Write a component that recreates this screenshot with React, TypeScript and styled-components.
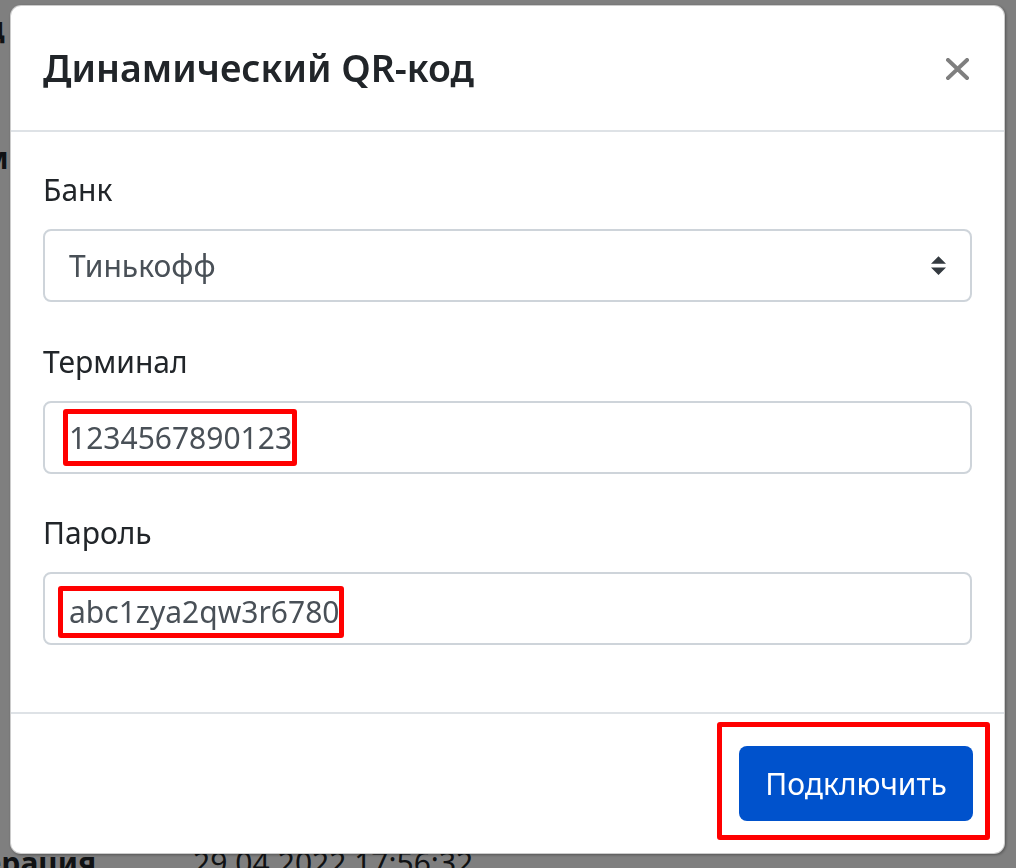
import React from "react";
import styled, { createGlobalStyle } from "styled-components";

const GlobalStyle = createGlobalStyle`
  * { box-sizing: border-box; }
  html, body { margin: 0; padding: 0; }
  body {
    background: #ffffff;
    font-family: "Noto Sans", "Open Sans", sans-serif;
    color: #212529;
    overflow: hidden;
  }
`;

const Page = styled.div`
  height: 868px;
  overflow: hidden;
  padding-top: 7px;
`;

const Details = styled.div<{ $shift: number }>`
  display: grid;
  grid-template-columns: 252px 1fr;
  grid-auto-rows: 130px;
  margin-left: ${(p) => p.$shift}px;
  font-size: 30px;
  line-height: 42px;
`;

const DetailLabel = styled.div`
  font-weight: 700;
`;

const DetailValue = styled.div``;

const LastRow = styled(Details)`
  margin-top: 575px;
`;

const Backdrop = styled.div`
  position: fixed;
  inset: 0;
  background: rgba(0, 0, 0, 0.5);
  padding: 5px 0 0 10px;
`;

const Dialog = styled.div`
  width: 995px;
  background: #ffffff;
  border: 1px solid rgba(0, 0, 0, 0.2);
  border-radius: 11px;
  box-shadow: 1px 1px 3px rgba(0, 0, 0, 0.35);
  display: flex;
  flex-direction: column;
`;

const Header = styled.div`
  display: flex;
  align-items: center;
  justify-content: space-between;
  height: 126px;
  padding: 0 32px;
  border-bottom: 2px solid #dee2e6;
`;

const Title = styled.h5`
  margin: 0;
  font-size: 37.5px;
  line-height: 56px;
  font-weight: 600;
  color: #212529;
`;

const CloseButton = styled.button`
  border: 0;
  background: transparent;
  padding: 0;
  margin-right: 3px;
  margin-top: 2px;
  display: flex;
  cursor: pointer;
`;

const Body = styled.div`
  padding: 35px 32px 30px;
`;

const Group = styled.div`
  margin-bottom: 36.5px;
`;

const Label = styled.label`
  display: block;
  font-size: 30px;
  line-height: 45px;
  margin-bottom: 17px;
  color: #212529;
`;

const Field = styled.div`
  position: relative;
  display: flex;
  align-items: center;
  height: 73px;
  border: 2px solid #ced4da;
  border-radius: 8px;
  padding: 0 24px;
  font-size: 30px;
  color: #495057;
`;

const Arrows = styled.svg`
  position: absolute;
  right: 24px;
  top: 25px;
`;

const Mark = styled.span<{ $pl: number; $h: number; $dy?: number }>`
  display: inline-flex;
  align-items: center;
  height: ${(p) => p.$h}px;
  border: 5px solid #ff0000;
  border-radius: 3px;
  padding: 0 0 0 ${(p) => p.$pl}px;
  margin-left: ${(p) => -(p.$pl + 5)}px;
  margin-top: ${(p) => p.$dy ?? 0}px;
`;

const Footer = styled.div`
  display: flex;
  justify-content: flex-end;
  border-top: 2px solid #dee2e6;
  padding: 8px 14px 13px;
`;

const ButtonMark = styled.div`
  border: 5px solid #ff0000;
  border-radius: 3px;
  padding: 19px 12px 14px 17px;
`;

const PrimaryButton = styled.button`
  width: 234px;
  height: 75px;
  border: 0;
  border-radius: 8px;
  background: #0052cc;
  color: #ffffff;
  font-family: "Noto Sans", "Open Sans", sans-serif;
  font-size: 30px;
  cursor: pointer;
`;

export default function App() {
  return (
    <>
      <GlobalStyle />
      <Page>
        <Details $shift={-53}>
          <DetailLabel>Код</DetailLabel>
          <DetailValue>QR</DetailValue>
          <DetailLabel>Сумма</DetailLabel>
          <DetailValue>0,00</DetailValue>
        </Details>
        <LastRow $shift={-59}>
          <DetailLabel>Операция</DetailLabel>
          <DetailValue>29.04.2022 17:56:32</DetailValue>
        </LastRow>
      </Page>
      <Backdrop>
        <Dialog>
          <Header>
            <Title>Динамический QR-код</Title>
            <CloseButton aria-label="Закрыть">
              <svg width="23" height="22" viewBox="0 0 23 22">
                <path
                  d="M2 2 L21 20 M21 2 L2 20"
                  stroke="#7f7f7f"
                  strokeWidth="4"
                  strokeLinecap="square"
                />
              </svg>
            </CloseButton>
          </Header>
          <Body>
            <Group>
              <Label>Банк</Label>
              <Field>
                Тинькофф
                <Arrows width="15" height="19" viewBox="0 0 4 5">
                  <path d="M2 0L0 2h4zm0 5L0 3h4z" fill="#343a40" />
                </Arrows>
              </Field>
            </Group>
            <Group>
              <Label>Терминал</Label>
              <Field>
                <Mark $pl={1} $h={57}>1234567890123</Mark>
              </Field>
            </Group>
            <Group>
              <Label>Пароль</Label>
              <Field>
                <Mark $pl={6} $h={52} $dy={6}>abc1zya2qw3r6780</Mark>
              </Field>
            </Group>
          </Body>
          <Footer>
            <ButtonMark>
              <PrimaryButton>Подключить</PrimaryButton>
            </ButtonMark>
          </Footer>
        </Dialog>
      </Backdrop>
    </>
  );
}
